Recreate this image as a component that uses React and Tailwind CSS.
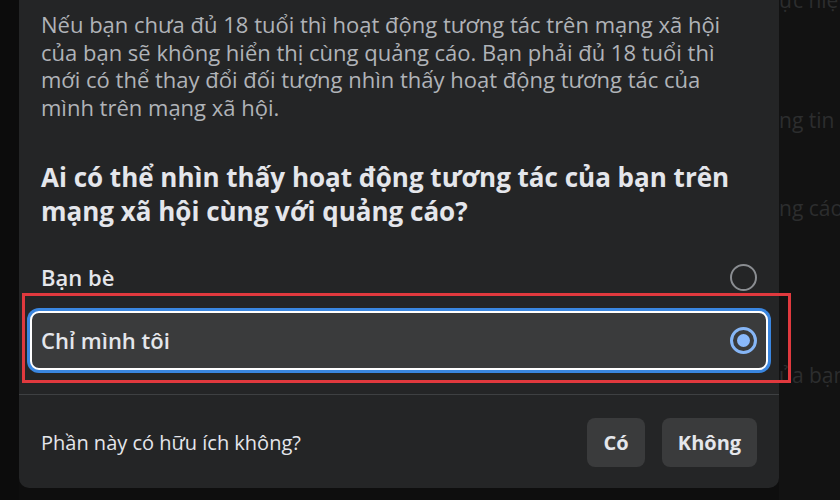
export default function App() {
  const font = { fontFamily: '"Open Sans", "Noto Sans", sans-serif' };
  return (
    <div className="w-[840px] h-[500px] bg-[#0e0e0e] flex overflow-hidden" style={font}>
      <div className="w-[19px] shrink-0 bg-[#0c0c0c]" />
      <div className="w-[760px] shrink-0 h-[488px] bg-[#242526] rounded-b-[10px] relative flex flex-col">
        <p className="px-[22px] pt-[11px] text-[22px] leading-[27.5px] text-[#b0b3b8] whitespace-nowrap">
          Nếu bạn chưa đủ 18 tuổi thì hoạt động tương tác trên mạng xã hội
          <br />
          của bạn sẽ không hiển thị cùng quảng cáo. Bạn phải đủ 18 tuổi thì
          <br />
          mới có thể thay đổi đối tượng nhìn thấy hoạt động tương tác của
          <br />
          mình trên mạng xã hội.
        </p>
        <h2 className="px-[22px] mt-[39px] text-[26px] leading-[34px] font-bold text-[#e4e6eb] whitespace-nowrap">
          Ai có thể nhìn thấy hoạt động tương tác của bạn trên
          <br />
          mạng xã hội cùng với quảng cáo?
        </h2>
        <div className="px-[11px] mt-[25px] flex flex-col gap-[10px]">
          <div className="h-[48px] px-[11px] flex items-center justify-between">
            <span className="text-[22px] font-semibold text-[#e4e6eb]">Bạn bè</span>
            <span className="w-[27px] h-[27px] rounded-full border-2 border-[#8a8d91]" />
          </div>
          <div className="h-[59px] rounded-[9px] border-2 border-white bg-[#3a3b3c] shadow-[0_0_0_3px_#3a86e0] pl-[9px] pr-[9px] flex items-center justify-between">
            <span className="text-[22px] font-semibold text-[#e4e6eb]">Chỉ mình tôi</span>
            <span className="w-[27px] h-[27px] rounded-full border-[3px] border-[#86b6f6] flex items-center justify-center">
              <span className="w-[13px] h-[13px] rounded-full bg-[#8ab9fb]" />
            </span>
          </div>
        </div>
        <div className="mt-[24px] border-t border-[#3e4042]" />
        <div className="flex-1 px-[22px] pt-[2px] flex items-center justify-between">
          <span className="text-[20px] text-[#e4e6eb]">Phần này có hữu ích không?</span>
          <div className="flex gap-[17px]">
            <button className="w-[58px] h-[49px] rounded-[8px] bg-[#3a3b3c] text-[20px] font-bold text-[#e4e6eb]">Có</button>
            <button className="w-[95px] h-[49px] rounded-[8px] bg-[#3a3b3c] text-[20px] font-bold text-[#e4e6eb]">Không</button>
          </div>
        </div>
        <div className="absolute left-[3px] top-[293px] w-[769px] h-[90px] border-[3px] border-[#e0393e] pointer-events-none" />
      </div>
      <div className="flex-1 bg-[#121212] h-[500px] flex flex-col text-[21px] text-[#2c2d2e] whitespace-nowrap overflow-hidden">
        <span className="-mt-[14px] leading-[28px]">ực hiện</span>
        <span className="mt-[92px] leading-[28px]">ng tin c</span>
        <span className="mt-[60px] leading-[28px]">ng cáo</span>
        <span className="mt-[139px] leading-[28px]">ủa bạn</span>
      </div>
    </div>
  );
}
